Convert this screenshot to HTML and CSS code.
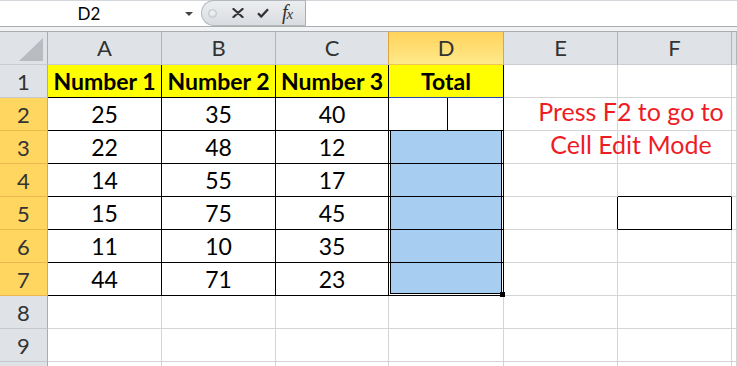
FILE: index.html
```html
<!DOCTYPE html>
<html>
<head>
<meta charset="utf-8">
<link rel="stylesheet" href="styles.css">
</head>
<body>
<div class="app">
  <div class="fbar">
    <div class="namebox">
      <span class="ref">D2</span>
      <span class="dd"></span>
    </div>
    <div class="pill">
      <span class="knob"></span>
      <svg class="ico-x" width="12" height="10" viewBox="0 0 12 10"><path d="M1.5 1 L10.5 9 M10.5 1 L1.5 9" stroke="#333" stroke-width="2.3" stroke-linecap="round" fill="none"/></svg>
      <svg class="ico-ok" width="12" height="10" viewBox="0 0 12 10"><path d="M1 5.2 L4.3 8.6 L11 1.2" stroke="#333" stroke-width="2.3" stroke-linejoin="round" fill="none"/></svg>
      <span class="fx">f<span class="fx-x">x</span></span>
    </div>
    <div class="formula"></div>
  </div>
  <div class="band"></div>
  <div class="sheet">
    <div class="corner"><svg width="47" height="32" viewBox="0 0 47 32"><polygon points="43,6 43,29 19,29" fill="#b8bcc1"/></svg></div>
    <div class="ch">A</div>
    <div class="ch">B</div>
    <div class="ch pre">C</div>
    <div class="ch sel">D</div>
    <div class="ch">E</div>
    <div class="ch">F</div>
    <div class="ch"></div>

    <div class="rh">1</div>
    <div class="c t y">Number 1</div>
    <div class="c t y">Number 2</div>
    <div class="c t y">Number 3</div>
    <div class="c t y top">Total</div>
    <div class="c"></div>
    <div class="c"></div>
    <div class="c"></div>

    <div class="rh sel">2</div>
    <div class="c t">25</div>
    <div class="c t">35</div>
    <div class="c t">40</div>
    <div class="c t active"><span class="caret"></span></div>
    <div class="c"></div>
    <div class="c"></div>
    <div class="c"></div>

    <div class="rh sel">3</div>
    <div class="c t">22</div>
    <div class="c t">48</div>
    <div class="c t">12</div>
    <div class="c t sd"></div>
    <div class="c"></div>
    <div class="c"></div>
    <div class="c"></div>

    <div class="rh sel">4</div>
    <div class="c t">14</div>
    <div class="c t">55</div>
    <div class="c t">17</div>
    <div class="c t sd"></div>
    <div class="c"></div>
    <div class="c bbk"></div>
    <div class="c"></div>

    <div class="rh sel">5</div>
    <div class="c t">15</div>
    <div class="c t">75</div>
    <div class="c t">45</div>
    <div class="c t sd"></div>
    <div class="c brk"></div>
    <div class="c t"></div>
    <div class="c"></div>

    <div class="rh sel">6</div>
    <div class="c t">11</div>
    <div class="c t">10</div>
    <div class="c t">35</div>
    <div class="c t sd"></div>
    <div class="c"></div>
    <div class="c"></div>
    <div class="c"></div>

    <div class="rh sel">7</div>
    <div class="c t">44</div>
    <div class="c t">71</div>
    <div class="c t">23</div>
    <div class="c t sd last"></div>
    <div class="c"></div>
    <div class="c"></div>
    <div class="c"></div>

    <div class="rh">8</div>
    <div class="c"></div>
    <div class="c"></div>
    <div class="c"></div>
    <div class="c"></div>
    <div class="c"></div>
    <div class="c"></div>
    <div class="c"></div>

    <div class="rh">9</div>
    <div class="c"></div>
    <div class="c"></div>
    <div class="c"></div>
    <div class="c"></div>
    <div class="c"></div>
    <div class="c"></div>
    <div class="c"></div>

    <div class="rh"></div>
    <div class="c"></div>
    <div class="c"></div>
    <div class="c"></div>
    <div class="c"></div>
    <div class="c"></div>
    <div class="c"></div>
    <div class="c"></div>

    <div class="note">Press F2 to go to<br>Cell Edit Mode</div>
  </div>
</div>
</body>
</html>
```
FILE: styles.css
```css
html, body {
  margin: 0;
  padding: 0;
  background: #fff;
}
body {
  width: 737px;
  height: 366px;
  overflow: hidden;
}
.app {
  width: 737px;
  height: 366px;
  overflow: hidden;
  font-family: Lato, "Liberation Sans", sans-serif;
}

/* formula bar */
.fbar {
  display: flex;
  height: 27px;
  box-sizing: border-box;
  border-top: 1px solid #d3d6da;
  border-bottom: 1px solid #a9adb2;
  background: #fff;
}
.namebox {
  width: 201px;
  display: flex;
  align-items: center;
  background: #fff;
}
.ref {
  width: 178px;
  text-align: center;
  font-size: 17px;
  line-height: 20px;
  color: #000;
}
.dd {
  margin-left: 7px;
  width: 0;
  height: 0;
  border-left: 4px solid transparent;
  border-right: 4px solid transparent;
  border-top: 4px solid #444;
  margin-top: 1px;
}
.pill {
  width: 105px;
  box-sizing: border-box;
  display: flex;
  align-items: center;
  background: linear-gradient(#eceef1, #d9dce0);
  border: 1px solid #b3b7bc;
  border-right-color: #a9adb2;
  border-radius: 13px 0 0 13px;
  margin-top: -1px;
}
.knob {
  margin-left: 6px;
  width: 9px;
  height: 9px;
  box-sizing: border-box;
  border-radius: 50%;
  background: radial-gradient(circle at 50% 40%, #f4f4f4, #d2d4d6);
  border: 1px solid #c3c6c9;
}
.ico-x {
  margin-left: 15px;
  display: block;
}
.ico-ok {
  margin-left: 13px;
  display: block;
}
.fx {
  margin-left: 13px;
  font-family: "Liberation Serif", "DejaVu Serif", serif;
  font-style: italic;
  font-size: 20px;
  line-height: 20px;
  color: #333;
  letter-spacing: -1px;
}
.fx-x {
  font-size: 15px;
}
.formula {
  flex: 1;
  background: #fff;
}
.band {
  height: 5px;
  box-sizing: border-box;
  background: #f1f2f4;
  border-bottom: 1px solid #a9adb2;
}

/* sheet grid */
.sheet {
  position: relative;
  display: grid;
  grid-template-columns: 48px 114px 114px 113px 115px 114px 114px 1fr;
  grid-auto-rows: 33px;
}
.sheet > div {
  box-sizing: border-box;
  border-right: 1px solid #d4d4d4;
  border-bottom: 1px solid #d4d4d4;
  display: flex;
  align-items: flex-end;
  justify-content: center;
  font-size: 23px;
  line-height: 24px;
  color: #000;
  padding-bottom: 4px;
  white-space: nowrap;
}

.sheet > .corner {
  display: block;
  padding: 0;
  background: #dfe3e8;
  border-right-color: #a9adb2;
  border-bottom-color: #c9cdd2;
}
.corner svg {
  display: block;
}
.sheet > .ch {
  background: #dfe3e8;
  border-right-color: #b1b5ba;
  border-bottom-color: #c9cdd2;
  font-size: 22px;
  color: #333;
  padding-bottom: 4px;
}
.sheet > .ch.pre {
  border-right-color: #e1a53c;
}
.sheet > .ch.sel {
  background: linear-gradient(#ffd35c, #ffe98a);
  border-right-color: #e1a53c;
  border-bottom-color: #f2c552;
}
.sheet > .rh {
  background: #dfe3e8;
  border-right-color: #a9adb2;
  border-bottom-color: #c5c9ce;
  font-size: 22px;
  color: #333;
  padding-bottom: 3px;
}
.sheet > .rh.sel {
  background: #ffd660;
  border-right-color: #e0a83d;
  border-bottom-color: #ecb84e;
}

.sheet > .t {
  border-right-color: #000;
  border-bottom-color: #000;
}
.sheet > .y {
  background: #ffff00;
  font-weight: 700;
}
.sheet > .top {
  border-bottom-color: #2b47b0;
}
.sheet > .brk {
  border-right-color: #000;
}
.sheet > .bbk {
  border-bottom-color: #000;
}
.sheet > .active {
  justify-content: flex-start;
  align-items: stretch;
  padding-bottom: 0;
}
.caret {
  width: 59px;
  box-sizing: border-box;
  border-right: 1px solid #000;
}
.sheet > .sd {
  background: #a7cdf0;
  box-shadow: inset 1px 0 0 #fff, inset -1px 0 0 #fff, inset 2px 0 0 #000, inset -2px 0 0 #000;
}
.sheet > .sd.last {
  position: relative;
  box-shadow: inset 1px 0 0 #fff, inset -1px 0 0 #fff, inset 0 -1px 0 #fff, inset 2px 0 0 #000, inset -2px 0 0 #000, inset 0 -2px 0 #000;
}
.sheet > .sd.last::after {
  content: "";
  position: absolute;
  right: -2px;
  bottom: -2px;
  width: 5px;
  height: 5px;
  background: #000;
}

/* text box overlay */
.sheet > .note {
  position: absolute;
  left: 501px;
  top: 63px;
  width: 260px;
  display: block;
  border: none;
  padding: 0;
  text-align: center;
  font-size: 25px;
  line-height: 33px;
  color: #ee1c25;
}
```
